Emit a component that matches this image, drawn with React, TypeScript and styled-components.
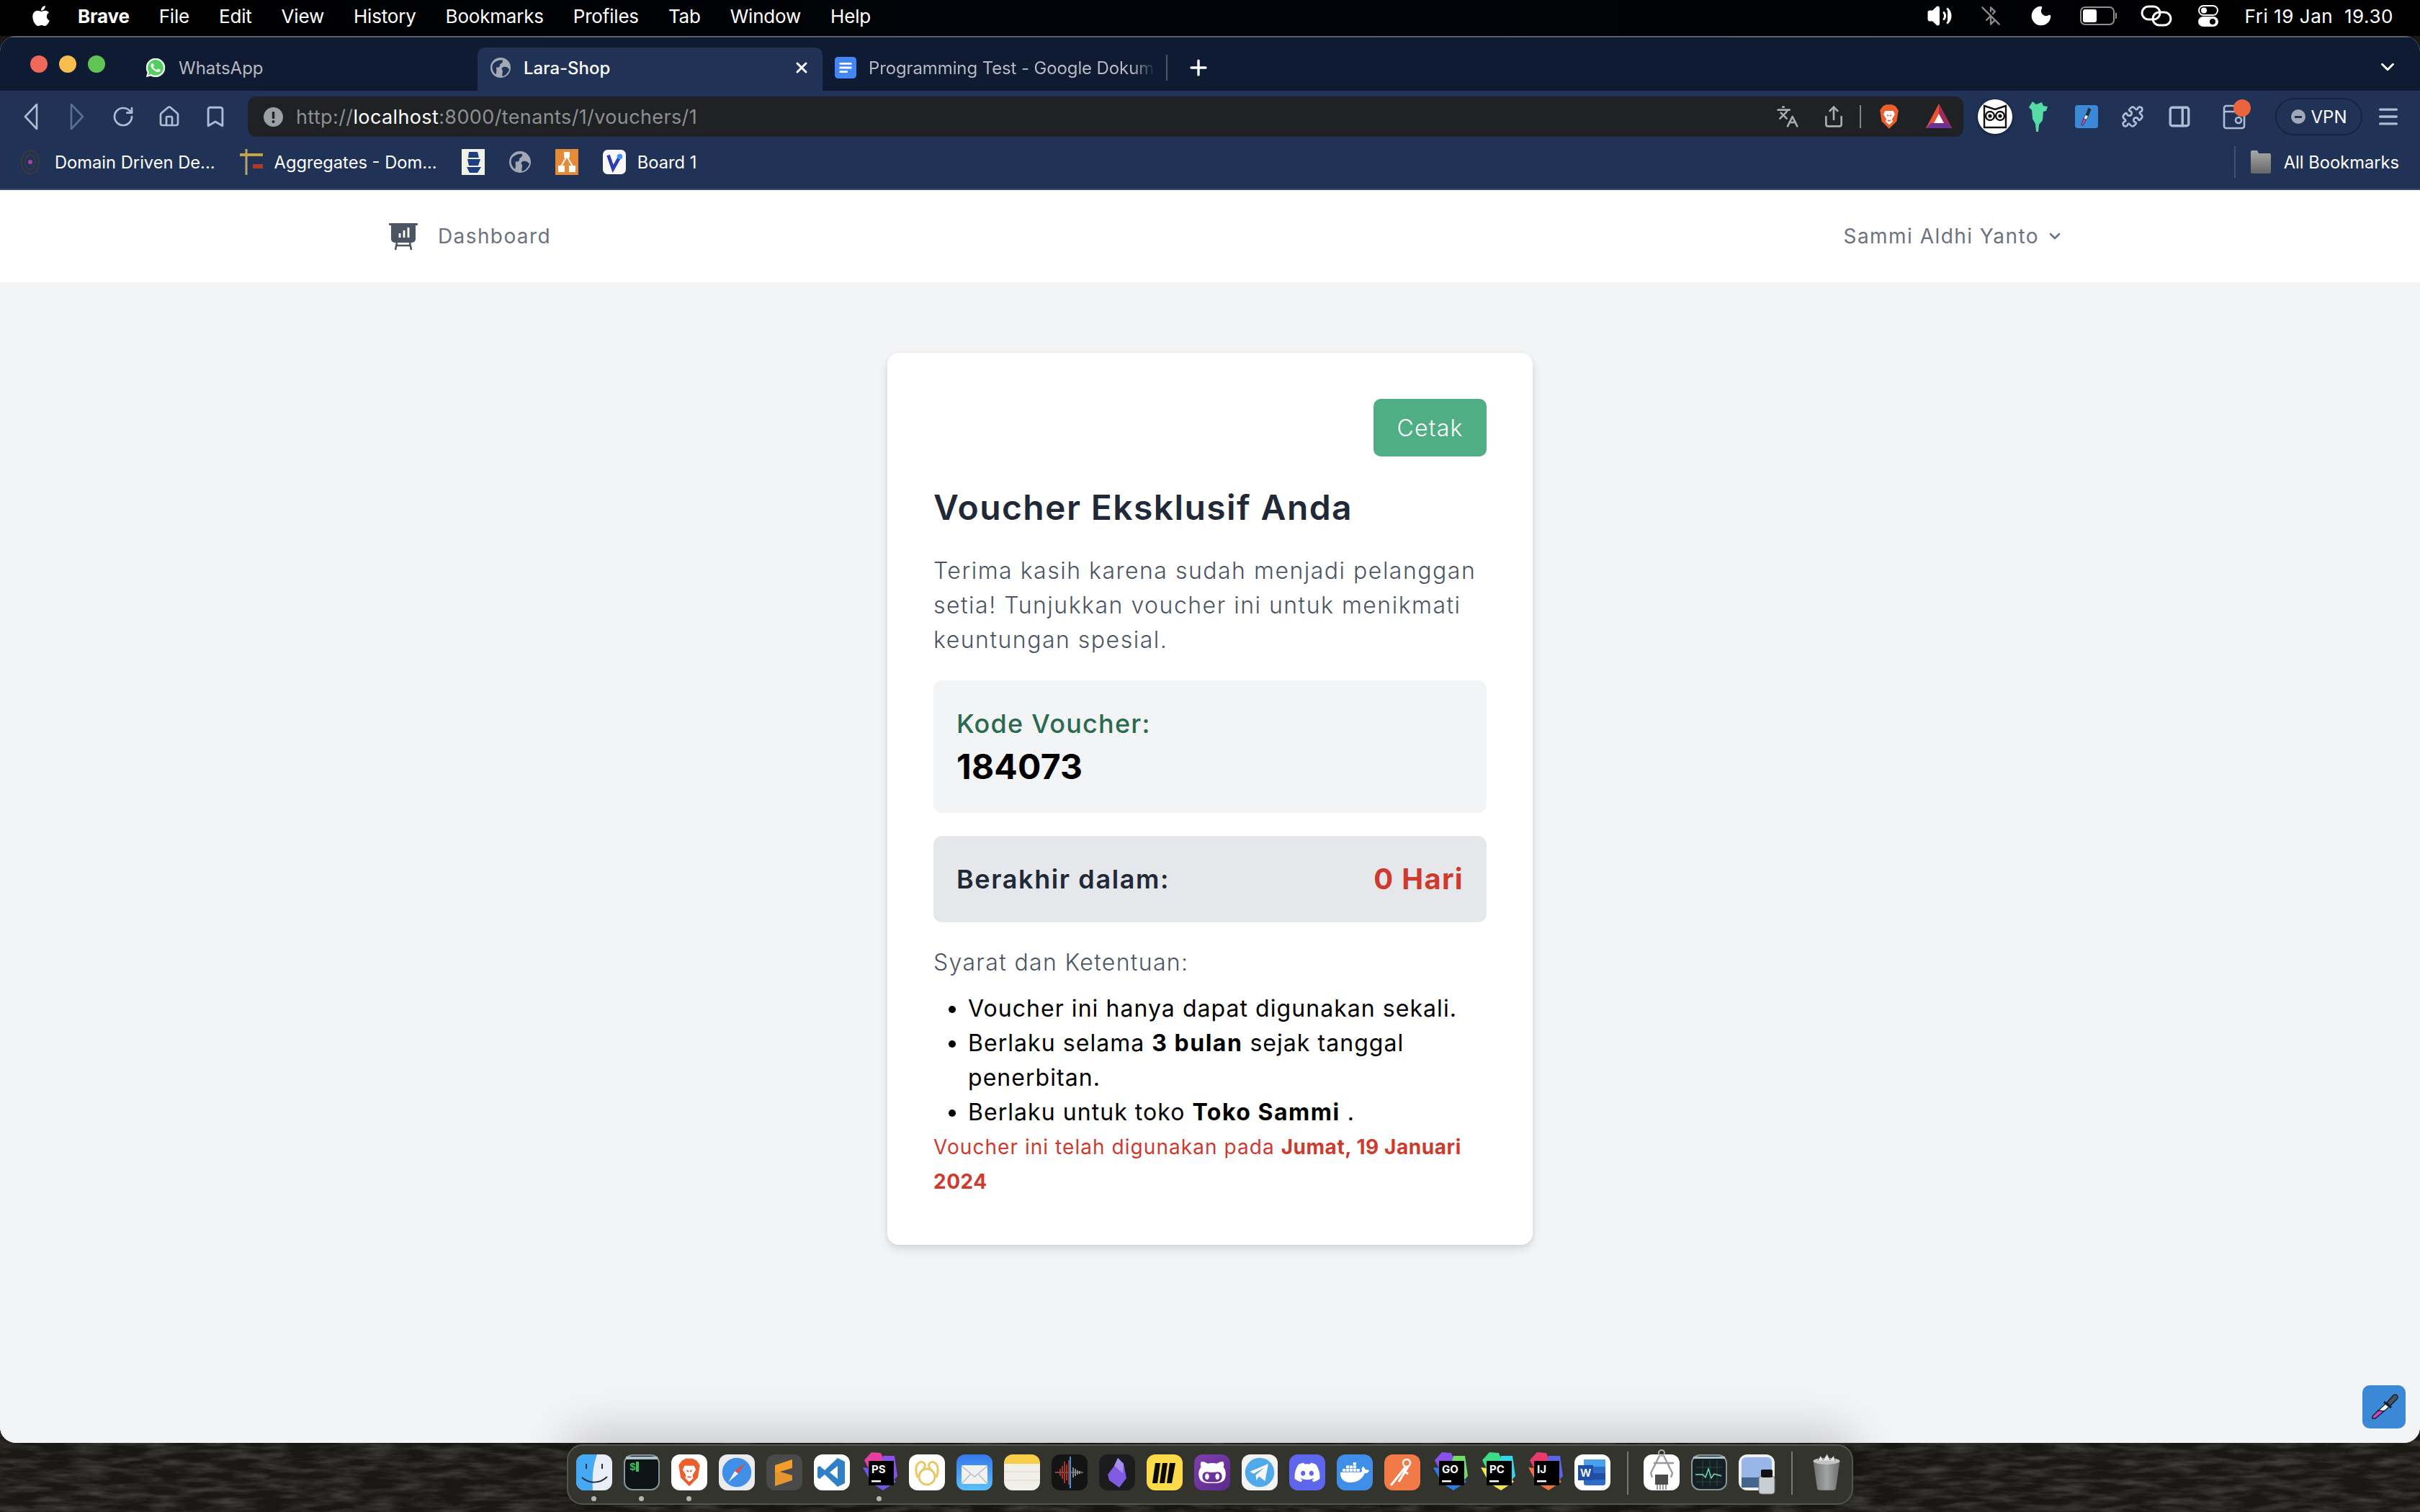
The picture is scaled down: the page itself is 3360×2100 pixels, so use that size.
import React, { PropsWithChildren } from 'react'
import styled, { createGlobalStyle } from 'styled-components'
import { ChevronDown, House, Bookmark, RotateCw, Languages, Share, Puzzle, PanelRight, Menu as MenuIcon, Plus, X, Volume2, BluetoothOff, Moon } from 'lucide-react'
import { FaGithubAlt, FaDiscord, FaDocker, FaWhatsapp, FaApple } from 'react-icons/fa'

const GlobalStyle = createGlobalStyle`
    html, body { margin: 0; padding: 0; background: #1a1916; }
    body { font-family: "Inter", "Liberation Sans", sans-serif; }
    * { box-sizing: border-box; }
`

const Desktop = styled.div`
    position: relative;
    width: 3360px;
    height: 2100px;
    overflow: hidden;
    display: flex;
    flex-direction: column;
    background: #191815;
`

const Rock = styled.svg`
    position: absolute;
    left: 0;
    top: 0;
    width: 3360px;
    height: 2100px;
`

/* mac menu bar */
const MenuBar = styled.div`
    position: relative;
    height: 50px;
    flex: none;
    display: flex;
    align-items: center;
    justify-content: space-between;
    padding: 0 37px 6px 41px;
    background: linear-gradient(90deg, #000 0%, #02040a 50%, #000 100%);
    color: #fff;
    font-size: 26px;
    letter-spacing: -0.2px;
`

const MenuLeft = styled.div`
    display: flex;
    align-items: center;
    gap: 41px;
`

const MenuRight = styled.div`
    display: flex;
    align-items: center;
`

const MenuGlyph = styled.span<{ $w: number }>`
    width: ${p => p.$w}px;
    display: flex;
    justify-content: center;
`

const MenuItem = styled.span<{ $bold?: boolean }>`
    font-weight: ${p => (p.$bold ? 700 : 400)};
`

const AppleMark = styled.span`
    display: flex;
    margin-right: -6px;
`

const Clock = styled.span`
    margin-left: 13px;
    white-space: pre;
    letter-spacing: 0.55px;
`

/* browser window */
const Window = styled.div`
    position: relative;
    height: 1954px;
    flex: none;
    display: flex;
    flex-direction: column;
    border-radius: 22px;
    overflow: hidden;
    background: #f3f4f6;
`

const TabStrip = styled.div`
    height: 76px;
    flex: none;
    display: flex;
    align-items: flex-end;
    background: #0f1b32;
    border-top: 2px solid #5b626e;
`

const Lights = styled.div`
    width: 184px;
    height: 60px;
    display: flex;
    align-items: center;
    gap: 16px;
    padding-left: 42px;
    padding-bottom: 14px;
`

const Light = styled.span<{ $c: string }>`
    width: 24px;
    height: 24px;
    border-radius: 50%;
    background: ${p => p.$c};
`

const Tab = styled.div<{ $active?: boolean; $divider?: boolean }>`
    width: 479px;
    height: 60px;
    display: flex;
    align-items: center;
    gap: 17px;
    padding: 0 17px 4px;
    border-radius: 10px 10px 0 0;
    background: ${p => (p.$active ? '#203256' : 'transparent')};
    color: ${p => (p.$active ? '#fff' : '#b5b9c2')};
    font-size: 24px;
    font-weight: ${p => (p.$active ? 500 : 400)};
    white-space: nowrap;
    overflow: hidden;
    position: relative;
    &::after {
        content: "";
        display: ${p => (p.$divider ? 'block' : 'none')};
        position: absolute;
        right: 0;
        top: 10px;
        bottom: 14px;
        width: 2px;
        background: #4b5568;
    }
`

const TabTitle = styled.span<{ $fade?: boolean }>`
    flex: 1;
    overflow: hidden;
    letter-spacing: ${p => (p.$fade ? '-0.12px' : '0')};
    mask-image: ${p => (p.$fade ? 'linear-gradient(90deg, #000 92%, transparent 100%)' : 'none')};
`

const TabIcon = styled.span`
    display: flex;
    flex: none;
    width: 30px;
    justify-content: center;
`

const WhatsappBadge = styled.span`
    width: 30px;
    height: 30px;
    display: flex;
    align-items: center;
    justify-content: center;
    border-radius: 50%;
    background: radial-gradient(circle, #53cf60 0 62%, transparent 64%);
    color: #fff;
`

const NewTab = styled.span`
    display: flex;
    margin: 0 0 15px 26px;
    color: #fff;
`

const TabMenu = styled.span`
    display: flex;
    margin: 0 30px 18px auto;
    color: #fff;
`

const ToolBar = styled.div`
    height: 70px;
    flex: none;
    display: flex;
    align-items: flex-start;
    padding: 8px 0 0 11px;
    background: #203256;
`

const NavButton = styled.span<{ $dim?: boolean }>`
    width: 64px;
    height: 56px;
    flex: none;
    display: flex;
    align-items: center;
    justify-content: center;
    color: ${p => (p.$dim ? '#5a6f93' : '#aebcd6')};
`

const UrlBar = styled.div`
    width: 2382px;
    height: 56px;
    flex: none;
    margin: 0 12px 0 13px;
    display: flex;
    align-items: center;
    padding: 0 0 0 22px;
    background: #202124;
    border-radius: 12px;
    font-size: 27px;
    color: #8d8f94;
    letter-spacing: 0.38px;
`

const UrlHost = styled.span`
    color: #fff;
`

const UrlText = styled.div`
    margin-left: 18px;
    flex: 1;
`

const UrlAction = styled.span<{ $w: number }>`
    width: ${p => p.$w}px;
    height: 56px;
    flex: none;
    display: flex;
    align-items: center;
    justify-content: center;
    color: #a9abaf;
`

const UrlDivider = styled.span`
    width: 2px;
    height: 32px;
    background: #83858a;
    margin: 0 4px;
`

const ExtSlot = styled.span<{ $w: number }>`
    position: relative;
    width: ${p => p.$w}px;
    height: 56px;
    flex: none;
    display: flex;
    align-items: center;
    justify-content: center;
    color: #aebcd6;
`

const OwlBadge = styled.span`
    width: 48px;
    height: 48px;
    border-radius: 50%;
    background: #fff;
    display: flex;
    align-items: center;
    justify-content: center;
    box-shadow: 0 1px 4px rgba(0, 0, 0, 0.5);
`

const PenBadge = styled.span`
    width: 32px;
    height: 32px;
    border-radius: 4px;
    background: #3b88d6;
    display: flex;
    align-items: center;
    justify-content: center;
`

const NotifyDot = styled.span`
    position: absolute;
    right: 13px;
    top: 4px;
    width: 24px;
    height: 24px;
    border-radius: 50%;
    background: #ea643c;
`

const VpnPill = styled.span`
    width: 121px;
    height: 52px;
    flex: none;
    margin: 2px 0 0 21px;
    display: flex;
    align-items: center;
    justify-content: center;
    gap: 8px;
    border: 2px solid #16243f;
    border-radius: 28px;
    color: #fff;
    font-size: 24px;
`

const VpnDot = styled.span`
    width: 20px;
    height: 20px;
    border-radius: 50%;
    background: #9fa9ba;
    display: flex;
    align-items: center;
    justify-content: center;
    &::before {
        content: "";
        width: 10px;
        height: 3px;
        background: #203256;
    }
`

const BookmarkBar = styled.div`
    height: 68px;
    flex: none;
    display: flex;
    align-items: center;
    padding: 0 29px 8px 28px;
    gap: 34px;
    background: #203256;
    border-bottom: 2px solid #3b4a68;
    color: #fff;
    font-size: 23.7px;
`

const Mark = styled.span`
    display: flex;
    align-items: center;
    gap: 16px;
    white-space: nowrap;
`

const AllMarks = styled(Mark)`
    margin-left: auto;
    gap: 17px;
    padding-left: 20px;
    border-left: 2px solid #3f5070;
    height: 44px;
`

/* page */
const Page = styled.div`
    flex: 1;
    position: relative;
    display: flex;
    flex-direction: column;
    font-family: "Inter", "Liberation Sans", sans-serif;
    background: #f3f4f6;
`

const Nav = styled.nav`
    height: 128px;
    flex: none;
    display: flex;
    align-items: center;
    justify-content: space-between;
    padding: 0 495px 0 540px;
    background: #fff;
    font-size: 28px;
    color: #6b7280;
    letter-spacing: 1.4px;
`

const NavBrand = styled.div`
    display: flex;
    align-items: center;
    gap: 28px;
    line-height: 40px;
`

const NavUser = styled.div`
    display: flex;
    align-items: center;
    gap: 10px;
    letter-spacing: 1.45px;
`

const Main = styled.main`
    flex: 1;
    display: flex;
    justify-content: center;
    align-items: flex-start;
    padding-top: 98px;
`

const Card = styled.div`
    width: 896px;
    padding: 64px;
    background: #fff;
    border-radius: 16px;
    box-shadow: 0 6px 14px rgba(0, 0, 0, 0.1), 0 2px 6px rgba(0, 0, 0, 0.06);
`

const CardTop = styled.div`
    display: flex;
    justify-content: flex-end;
    margin-bottom: 39px;
`

const PrintButton = styled.button`
    width: 157px;
    height: 80px;
    border: 0;
    border-radius: 10px;
    background: #4fae84;
    color: #fff;
    font: 300 32px "Inter", sans-serif;
    letter-spacing: 1.2px;
`

const Title = styled.h1`
    margin: 0 0 32px;
    font-size: 48px;
    line-height: 64px;
    font-weight: 600;
    color: #1f2937;
    letter-spacing: 1.4px;
`

const Lead = styled.p`
    margin: 0 0 32px;
    font-size: 32px;
    line-height: 48px;
    font-weight: 300;
    color: #4b5563;
    letter-spacing: 1.5px;
`

const CodeBox = styled.div`
    padding: 32px;
    border-radius: 12px;
    background: #f3f4f6;
`

const CodeLabel = styled.div`
    font-size: 36px;
    line-height: 56px;
    font-weight: 500;
    color: #2a6b4f;
    letter-spacing: 1.25px;
`

const CodeValue = styled.div`
    font-size: 48px;
    line-height: 64px;
    font-weight: 700;
    color: #000;
    letter-spacing: 0.2px;
`

const ExpiryBox = styled.div`
    display: flex;
    justify-content: space-between;
    align-items: center;
    margin-top: 32px;
    padding: 32px;
    border-radius: 12px;
    background: #e5e7eb;
`

const ExpiryLabel = styled.span`
    font-size: 36px;
    line-height: 56px;
    font-weight: 600;
    color: #1f2937;
    letter-spacing: 1.6px;
`

const ExpiryValue = styled.span`
    font-size: 40px;
    line-height: 56px;
    font-weight: 700;
    color: #d03a2e;
    letter-spacing: 1.3px;
`

const TermsTitle = styled.p`
    margin: 32px 0 16px;
    font-size: 32px;
    line-height: 48px;
    font-weight: 300;
    color: #4b5563;
    letter-spacing: 1.35px;
`

const Terms = styled.ul`
    margin: 0;
    padding: 0 0 0 48px;
    list-style: disc;
    font-size: 32px;
    line-height: 48px;
    font-weight: 400;
    color: #000;
    letter-spacing: 1.05px;
    strong { font-weight: 700; letter-spacing: 1.5px; }
`

const UsedNote = styled.p`
    margin: 0;
    font-size: 28px;
    line-height: 48px;
    font-weight: 400;
    color: #d03a2e;
    letter-spacing: 1.05px;
    strong { font-weight: 700; letter-spacing: 0.55px; }
`

const Dropper = styled.span`
    position: absolute;
    right: 20px;
    bottom: 20px;
    width: 60px;
    height: 60px;
    display: flex;
    align-items: center;
    justify-content: center;
    border-radius: 10px;
    background: #3b88d6;
`

/* dock */
const DockRow = styled.div`
    position: relative;
    z-index: 2;
    display: flex;
    justify-content: center;
    padding-top: 2px;
`

const Dock = styled.div`
    width: 1786px;
    height: 84px;
    display: flex;
    align-items: flex-start;
    gap: 16px;
    padding: 12px 0 0 11px;
    border: 2px solid #55554f;
    border-radius: 22px;
    background: #34342f;
    box-shadow: 0 -12px 70px rgba(0, 0, 0, 0.22);
`

const DockSlot = styled.span<{ $running?: boolean }>`
    position: relative;
    width: 50px;
    height: 50px;
    flex: none;
    svg { display: block; overflow: visible; }
    &::after {
        content: "";
        display: ${p => (p.$running ? 'block' : 'none')};
        position: absolute;
        left: 21px;
        top: 58px;
        width: 7px;
        height: 7px;
        border-radius: 50%;
        background: #b5b5b0;
    }
`

const DockGap = styled.span<{ $left: number; $right: number }>`
    width: 2px;
    height: 60px;
    flex: none;
    margin: -4px ${p => p.$right - 16}px 0 ${p => p.$left - 16}px;
    background: #77776f;
`

const TileIcon = styled.span<{ $bg: string }>`
    width: 50px;
    height: 50px;
    display: flex;
    align-items: center;
    justify-content: center;
    border-radius: 12px;
    background: ${p => p.$bg};
    color: #fff;
`

const Tile = (props: PropsWithChildren<{ bg: string }>) => <TileIcon $bg={props.bg}>{props.children}</TileIcon>

const Svg = (props: PropsWithChildren<{ s?: number; vb?: string }>) => (
    <svg width={props.s ?? 50} height={props.s ?? 50} viewBox={props.vb ?? '0 0 50 50'}>{props.children}</svg>
)

const BraveShield = () => (
    <>
        <path d="M14 7 L20 4 H30 L36 7 L41 14 L38 33 L25 46 L12 33 L9 14 Z" fill="#ec5f2d" />
        <path d="M18 15 H32 L35 21 L30 29 L31 34 L25 39 L19 34 L20 29 L15 21 Z" fill="#fff" />
        <path d="M21 22 L24 24 M29 22 L26 24 M22 32 H28" stroke="#ec5f2d" strokeWidth="2" />
    </>
)

const IdeIcon = (props: { label: string; colors: string[] }) => (
    <Svg>
        <polygon points="4,8 14,-3 27,-2 31,8 12,24" fill={props.colors[0]} />
        <polygon points="30,2 46,2 50,30 36,46 20,38" fill={props.colors[1]} />
        <polygon points="2,18 14,40 30,50 48,38 34,22" fill={props.colors[2]} />
        <rect x="10" y="9" width="35" height="34" fill="#000" />
        <text x="14" y="26" fontFamily="Inter" fontWeight="700" fontSize="15" fill="#fff">{props.label}</text>
        <rect x="14" y="36" width="13" height="2.5" fill="#fff" />
    </Svg>
)

const dockApps: { key: string; running?: boolean; icon: React.ReactNode }[] = [
    { key: 'finder', running: true, icon: (
        <Svg>
            <rect width="50" height="50" rx="12" fill="#e9eef6" />
            <path d="M12 0 H29 C24 14 22 26 23 50 H12 A12 12 0 0 1 0 38 V12 A12 12 0 0 1 12 0Z" fill="#45a9f4" />
            <path d="M14 13 V20 M36 13 V20" stroke="#20303f" strokeWidth="2" />
            <path d="M8 32 C18 41 33 41 43 31" stroke="#20303f" strokeWidth="2" fill="none" />
        </Svg>
    ) },
    { key: 'terminal', running: true, icon: (
        <Svg>
            <rect x="1" y="1" width="48" height="48" rx="11" fill="#0c1416" stroke="#8d9497" strokeWidth="2" />
            <rect x="3" y="3" width="44" height="4" fill="#a9c3c6" />
            <text x="8" y="22" fontFamily="Liberation Mono" fontSize="15" fontWeight="700" fill="#39c05c">$</text>
            <rect x="17" y="10" width="4" height="14" fill="#39c05c" />
        </Svg>
    ) },
    { key: 'brave', running: true, icon: (
        <Tile bg="#fff"><Svg s={46}><BraveShield /></Svg></Tile>
    ) },
    { key: 'safari', icon: (
        <Tile bg="#e9ebee">
            <Svg s={46}>
                <circle cx="25" cy="25" r="22" fill="#3f8fe8" />
                <polygon points="38,10 22,23 27,27" fill="#ec4a3a" />
                <polygon points="12,40 22,23 27,27" fill="#f4f4f4" />
            </Svg>
        </Tile>
    ) },
    { key: 'sublime', icon: (
        <Tile bg="#4a4a4a">
            <Svg>
                <polygon points="36,7 36,19 12,26 12,15" fill="#f59d2c" />
                <polygon points="12,22 36,29 36,36 12,44 12,33" fill="#f59d2c" opacity="0.9" />
            </Svg>
        </Tile>
    ) },
    { key: 'vscode', icon: (
        <Tile bg="#fff">
            <Svg>
                <polygon points="33,5 43,10 43,40 33,45 15,28 8,34 5,32 5,18 8,16 15,22" fill="#2f80c8" />
                <polygon points="33,16 33,34 22,25" fill="#fff" />
            </Svg>
        </Tile>
    ) },
    { key: 'phpstorm', running: true, icon: <IdeIcon label="PS" colors={['#e63ea3', '#8a50e8', '#6f55e8']} /> },
    { key: 'navicat', icon: (
        <Tile bg="#fff">
            <Svg>
                <circle cx="25" cy="31" r="11" fill="none" stroke="#e9c765" strokeWidth="3" />
                <path d="M12 32 C6 16 14 7 21 12 C24 15 21 20 19 22 M38 32 C44 16 36 7 29 12 C26 15 29 20 31 22" fill="none" stroke="#e9c765" strokeWidth="3" />
            </Svg>
        </Tile>
    ) },
    { key: 'mail', icon: (
        <Tile bg="linear-gradient(#3478ea, #5ac0fb)">
            <Svg>
                <rect x="7" y="15" width="36" height="26" rx="2" fill="#f1f1f1" />
                <path d="M7 16 L25 31 L43 16 M7 41 L20 27 M43 41 L30 27" stroke="#b7bcc2" strokeWidth="1.4" fill="none" />
            </Svg>
        </Tile>
    ) },
    { key: 'notes', icon: (
        <Tile bg="linear-gradient(#f8cd47 0 26%, #f1efe7 26%)">
            <Svg>
                <path d="M0 24 H50 M0 36 H50" stroke="#dfdcd2" strokeWidth="1.2" />
            </Svg>
        </Tile>
    ) },
    { key: 'voice', icon: (
        <Tile bg="#141414">
            <Svg>
                <path d="M5 25 H44" stroke="#777" strokeWidth="1.5" />
                <path d="M8 25 H10 M12 20 V30 M15 16 V34 M18 10 V40 M21 14 V36 M24 8 V42" stroke="#a4332b" strokeWidth="2" />
                <path d="M30 18 V32 M33 20 V30 M36 22 V28 M39 23 V27" stroke="#8a8a8a" strokeWidth="2" />
                <path d="M26 3 V47" stroke="#3b96e2" strokeWidth="2" />
            </Svg>
        </Tile>
    ) },
    { key: 'obsidian', icon: (
        <Tile bg="#1c1c1e">
            <Svg>
                <polygon points="26,5 34,13 38,33 28,46 14,36 12,28 21,16" fill="#7e5be0" />
                <polygon points="26,5 34,13 33,26 21,16" fill="#a98cf0" />
            </Svg>
        </Tile>
    ) },
    { key: 'miro', icon: (
        <Tile bg="#fbdb4a">
            <Svg>
                <polygon points="12,12 19,12 15,40 8,40" fill="#0b0b0b" />
                <polygon points="22,12 29,12 25,40 18,40" fill="#0b0b0b" />
                <polygon points="32,12 40,12 35,40 28,40" fill="#0b0b0b" />
            </Svg>
        </Tile>
    ) },
    { key: 'github', icon: <Tile bg="linear-gradient(135deg, #7f3fae, #5b2a8c)"><FaGithubAlt size={40} /></Tile> },
    { key: 'telegram', icon: (
        <Tile bg="#f2f3f3">
            <Svg s={46}>
                <circle cx="25" cy="25" r="22" fill="#50a9e8" />
                <polygon points="10,24 38,12 33,38 24,31 20,37 19,29 32,18 16,27" fill="#f5f7f8" />
            </Svg>
        </Tile>
    ) },
    { key: 'discord', icon: <Tile bg="#5f66ee"><FaDiscord size={38} /></Tile> },
    { key: 'docker', icon: <Tile bg="#3f8fe8"><FaDocker size={40} /></Tile> },
    { key: 'postman', icon: (
        <Tile bg="#f27a47">
            <Svg>
                <circle cx="31" cy="12" r="5" fill="none" stroke="#fff" strokeWidth="2.5" />
                <path d="M29 18 L14 37 L9 43 M33 17 L20 38 M27 23 L33 27" stroke="#fff" strokeWidth="3.2" fill="none" />
            </Svg>
        </Tile>
    ) },
    { key: 'goland', icon: <IdeIcon label="GO" colors={['#8a50e8', '#6fdc6a', '#2b7fe8']} /> },
    { key: 'pycharm', icon: <IdeIcon label="PC" colors={['#3ddc84', '#30d6e8', '#f2e64b']} /> },
    { key: 'intellij', icon: <IdeIcon label="IJ" colors={['#ea3a6c', '#5b63e8', '#f0713a']} /> },
    { key: 'word', icon: (
        <Tile bg="#fff">
            <Svg>
                <rect x="13" y="7" width="30" height="36" rx="3" fill="#2c6bc8" />
                <rect x="13" y="7" width="30" height="10" fill="#49a0ea" />
                <rect x="13" y="26" width="30" height="9" fill="#1e4fa0" />
                <rect x="5" y="15" width="21" height="21" fill="#1d4fa8" />
                <text x="8" y="31" fontFamily="Inter" fontWeight="600" fontSize="15" fill="#fff">W</text>
            </Svg>
        </Tile>
    ) },
]

const utilApps: { key: string; icon: React.ReactNode }[] = [
    { key: 'sysinfo', icon: (
        <Tile bg="#fff">
            <Svg>
                <circle cx="25" cy="-2" r="4" fill="none" stroke="#aaa" strokeWidth="2" />
                <path d="M22 2 L10 26 L12 32 M28 2 L40 26 L38 32 M14 12 H42" stroke="#9a9a9a" strokeWidth="2.4" fill="none" />
                <rect x="16" y="28" width="18" height="14" fill="#4b4b4b" />
                <path d="M19 42 V49 M23 42 V49 M27 42 V49 M31 42 V49" stroke="#777" strokeWidth="1.5" />
            </Svg>
        </Tile>
    ) },
    { key: 'activity', icon: (
        <Svg>
            <rect x="1" y="1" width="48" height="48" rx="11" fill="#142023" stroke="#8d9497" strokeWidth="2" />
            <rect x="3" y="3" width="44" height="3" fill="#a9c3c6" />
            <path d="M7 18 H43 M7 28 H43 M7 38 H43 M16 8 V44 M26 8 V44 M36 8 V44" stroke="#2c4a44" strokeWidth="1" />
            <path d="M6 28 H16 L20 32 L24 20 L28 33 L32 27 L42 30" stroke="#7de0bd" strokeWidth="1.4" fill="none" />
        </Svg>
    ) },
    { key: 'preview', icon: (
        <Svg>
            <rect width="50" height="50" rx="12" fill="#eeeeec" />
            <rect x="4" y="4" width="42" height="42" rx="6" fill="#98b7e8" />
            <rect x="4" y="32" width="30" height="14" fill="#45668c" />
            <rect x="28" y="30" width="22" height="25" rx="4" fill="#c9ced2" stroke="#777" />
            <rect x="31" y="21" width="16" height="11" rx="2" fill="#111" />
        </Svg>
    ) },
]

const Trash = () => (
    <svg width="46" height="50" viewBox="0 0 50 50">
        <defs>
            <linearGradient id="trashBody" x1="0" x2="1">
                <stop offset="0" stopColor="#6f7170" />
                <stop offset="0.5" stopColor="#a3a5a4" />
                <stop offset="1" stopColor="#6b6d6c" />
            </linearGradient>
        </defs>
        <path d="M5 8 H45 L39 50 A6 6 0 0 1 33 52 H16 A6 6 0 0 1 11 50 Z" fill="url(#trashBody)" />
        <ellipse cx="25" cy="8" rx="20" ry="5" fill="#c3c5c4" />
        <path d="M12 7 L16 0 L20 6 L26 -3 L30 6 L36 0 L38 7" fill="#e8e8e8" stroke="#555" strokeWidth="1" />
    </svg>
)

const BackIcon = () => (
    <svg width="24" height="40" viewBox="0 0 24 40" fill="none" stroke="currentColor" strokeWidth="2.6" strokeLinejoin="round">
        <path d="M20 3 L4 20 L20 37 Z" />
    </svg>
)

const ForwardIcon = () => (
    <svg width="24" height="40" viewBox="0 0 24 40" fill="none" stroke="currentColor" strokeWidth="2.6" strokeLinejoin="round">
        <path d="M4 3 L20 20 L4 37 Z" />
    </svg>
)

const AlertIcon = () => (
    <svg width="27" height="27" viewBox="0 0 27 27">
        <circle cx="13.5" cy="13.5" r="13.5" fill="#9aa0a6" />
        <rect x="11.8" y="6" width="3.4" height="10" rx="1.2" fill="#202124" />
        <circle cx="13.5" cy="20" r="2" fill="#202124" />
    </svg>
)

const EarthIcon = (props: { bg: string; s: number }) => (
    <svg width={props.s} height={props.s} viewBox="0 0 30 30">
        <circle cx="15" cy="15" r="15" fill="#a3a9b4" />
        <path d="M4 9 C8 5 13 3 18 4 C19 7 16 9 14 10 C15 13 12 16 9 14 C8 17 10 20 8 25 C3 21 1 14 4 9 Z" fill={props.bg} />
        <path d="M19 14 C23 13 27 15 28 18 C26 23 22 27 18 28 C16 24 20 21 17 18 C16 16 17 15 19 14 Z" fill={props.bg} />
    </svg>
)

const BatIcon = () => (
    <svg width="40" height="36" viewBox="0 0 40 36">
        <polygon points="20,0 38,34 2,34" fill="#e9512f" />
        <polygon points="20,0 38,34 20,22" fill="#a12a5f" />
        <polygon points="8,27 32,27 37,34 3,34" fill="#6b3298" />
        <polygon points="20,14 27,27 13,27" fill="#fff" />
    </svg>
)

const OwlIcon = () => (
    <svg width="36" height="36" viewBox="0 0 36 36" fill="none" stroke="#111" strokeWidth="2.4">
        <path d="M3 3 L18 8 L33 3 V33 H3 Z" />
        <circle cx="11" cy="17" r="6" />
        <circle cx="25" cy="17" r="6" />
        <circle cx="11" cy="17" r="1.4" fill="#111" />
        <circle cx="25" cy="17" r="1.4" fill="#111" />
    </svg>
)

const GhostIcon = () => (
    <svg width="30" height="46" viewBox="0 0 30 46" fill="#57dba4">
        <path d="M7 2 L12 6 L20 3 L22 8 L28 9 L26 15 L22 16 L21 28 L16 34 L15 44 L12 44 L11 33 L7 26 L6 14 L2 10 Z" />
    </svg>
)

const PenIcon = () => (
    <svg width="24" height="30" viewBox="0 0 32 46">
        <path d="M20 4 L26 8 L20 22 L14 19 Z" fill="#25313c" />
        <path d="M14 19 L20 22 L15 30 L10 27 Z" fill="#fff" stroke="#111" />
        <path d="M10 27 L15 30 L8 42 L5 40 Z" fill="#d14ac0" stroke="#111" />
    </svg>
)

const WalletIcon = () => (
    <svg width="32" height="38" viewBox="0 0 32 38" fill="none" stroke="currentColor" strokeWidth="2.6">
        <rect x="2" y="4" width="28" height="31" rx="3" />
        <path d="M2 12 H30" />
        <circle cx="22" cy="24" r="4" />
    </svg>
)

const FolderIcon = () => (
    <svg width="30" height="34" viewBox="0 0 30 34">
        <defs>
            <linearGradient id="folderFill" x1="0" x2="0" y1="0" y2="1">
                <stop offset="0" stopColor="#a9a9a9" />
                <stop offset="1" stopColor="#666" />
            </linearGradient>
        </defs>
        <path d="M1 3 A2 2 0 0 1 3 1 H10 L12 5 H27 A2 2 0 0 1 29 7 V31 A2 2 0 0 1 27 33 H3 A2 2 0 0 1 1 31 Z" fill="url(#folderFill)" />
    </svg>
)

const BatteryIcon = () => (
    <svg width="52" height="26" viewBox="0 0 52 26" fill="none">
        <rect x="1" y="1" width="46" height="24" rx="6" stroke="#8f8f8f" strokeWidth="2" />
        <rect x="4" y="4" width="19" height="18" rx="3" fill="#fff" />
        <path d="M50 9 V17" stroke="#8f8f8f" strokeWidth="2" />
    </svg>
)

const LinkedIcon = () => (
    <svg width="44" height="30" viewBox="0 0 44 30" fill="none" stroke="#fff" strokeWidth="3">
        <rect x="2" y="2" width="25" height="18" rx="9" />
        <rect x="17" y="10" width="25" height="18" rx="9" />
    </svg>
)

const ControlIcon = () => (
    <svg width="28" height="30" viewBox="0 0 28 30">
        <rect x="1" y="1" width="26" height="13" rx="6.5" fill="none" stroke="#fff" strokeWidth="2" />
        <circle cx="8" cy="7.5" r="4" fill="#fff" />
        <rect x="0" y="16" width="28" height="14" rx="7" fill="#fff" />
        <circle cx="20" cy="23" r="4" fill="#000" />
    </svg>
)

const DocsIcon = () => (
    <svg width="32" height="32" viewBox="0 0 32 32">
        <rect width="32" height="32" rx="5" fill="#4285f4" />
        <path d="M7 10 H25 M7 16 H25 M7 22 H19" stroke="#fff" strokeWidth="3" />
    </svg>
)

const BoardIcon = () => (
    <svg width="32" height="36" viewBox="0 0 34 36">
        <rect width="34" height="36" rx="7" fill="#f7f7fa" />
        <path d="M8 8 L15 28 L24 12" fill="none" stroke="#2b3bb0" strokeWidth="5" />
        <circle cx="25" cy="10" r="4" fill="#4c8ef0" />
    </svg>
)

const SpiralIcon = () => (
    <svg width="32" height="34" viewBox="0 0 32 34" fill="none" stroke="#3a3a3a" strokeWidth="2">
        <ellipse cx="14" cy="17" rx="12" ry="16" />
        <ellipse cx="14" cy="17" rx="7" ry="10" />
        <circle cx="14" cy="17" r="3" fill="#b0409c" stroke="none" />
    </svg>
)

const CraneIcon = () => (
    <svg width="32" height="36" viewBox="0 0 32 36">
        <path d="M0 6 H32 V10 H0 Z" fill="#c9a33f" />
        <path d="M9 0 V36" stroke="#b8a46a" strokeWidth="3" />
        <rect x="18" y="21" width="14" height="6" fill="#b0392f" />
    </svg>
)

const ShipIcon = () => (
    <svg width="32" height="36" viewBox="0 0 32 36">
        <rect width="32" height="36" fill="#f1f1e6" />
        <path d="M10 4 H22 L24 12 H9 Z M8 14 H26 L23 23 H10 Z M7 25 H27 L22 33 H11 Z" fill="#1b3f82" />
    </svg>
)

const DiagramIcon = () => (
    <svg width="32" height="36" viewBox="0 0 32 36">
        <rect width="32" height="36" fill="#e58a35" />
        <path d="M16 10 L8 24 M16 10 L24 24" stroke="#fff" strokeWidth="2" />
        <rect x="12" y="4" width="8" height="8" fill="#fff" />
        <rect x="4" y="23" width="9" height="9" fill="#fff" />
        <rect x="19" y="23" width="9" height="9" fill="#fff" />
    </svg>
)

const BrandIcon = () => (
    <svg width="40" height="40" viewBox="0 0 40 40" fill="#4b5563">
        <rect x="0" y="2" width="40" height="3" rx="1" />
        <path d="M3 5 H37 V24 A5 5 0 0 1 32 29 H8 A5 5 0 0 1 3 24 Z" />
        <path d="M11 29 L9 39 M29 29 L31 39 M10 33 H30" stroke="#4b5563" strokeWidth="2.6" />
        <path d="M15 16 V22 M21 12 V22 M27 8 V22" stroke="#fff" strokeWidth="2.8" />
    </svg>
)

const DropperIcon = () => (
    <svg width="40" height="40" viewBox="0 0 40 40">
        <path d="M24 14 L33 4 A3.5 3.5 0 0 1 38 9 L28 19 Z" fill="#45555f" stroke="#15202a" strokeWidth="1.6" />
        <path d="M20 13 L30 21" stroke="#15202a" strokeWidth="3" />
        <path d="M22 16 L27 20 L20 26 L12 25 Z" fill="#fff" stroke="#15202a" strokeWidth="1.2" />
        <path d="M12 25 L20 26 L8 36 L4 36 L4 33 Z" fill="#cf47bd" stroke="#15202a" strokeWidth="1.4" />
    </svg>
)

export default function App() {
    return (
        <>
            <GlobalStyle />
            <Desktop>
                <Rock aria-hidden="true">
                    <filter id="rockGrain">
                        <feTurbulence type="fractalNoise" baseFrequency="0.02 0.11" numOctaves="5" seed="4" />
                        <feColorMatrix values="0 0 0 0 0.2  0 0 0 0 0.19  0 0 0 0 0.17  0.8 0 0 0 -0.3" />
                    </filter>
                    <rect y="1990" width="3360" height="110" filter="url(#rockGrain)" />
                </Rock>

                <MenuBar>
                    <MenuLeft>
                        <AppleMark><FaApple size={32} color="#fff" /></AppleMark>
                        <MenuItem $bold>Brave</MenuItem>
                        {['File', 'Edit', 'View', 'History', 'Bookmarks', 'Profiles', 'Tab', 'Window', 'Help'].map(m => (
                            <MenuItem key={m}>{m}</MenuItem>
                        ))}
                    </MenuLeft>
                    <MenuRight>
                        <MenuGlyph $w={70}><Volume2 size={36} color="#fff" fill="#fff" strokeWidth={2} /></MenuGlyph>
                        <MenuGlyph $w={72}><BluetoothOff size={28} color="#8a8a8a" /></MenuGlyph>
                        <MenuGlyph $w={68}><Moon size={32} color="#fff" fill="#fff" /></MenuGlyph>
                        <MenuGlyph $w={92}><BatteryIcon /></MenuGlyph>
                        <MenuGlyph $w={68}><LinkedIcon /></MenuGlyph>
                        <MenuGlyph $w={76}><ControlIcon /></MenuGlyph>
                        <Clock>Fri 19 Jan  19.30</Clock>
                    </MenuRight>
                </MenuBar>

                <Window>
                    <TabStrip>
                        <Lights>
                            <Light $c="#f0685c" />
                            <Light $c="#f5be4f" />
                            <Light $c="#5fc454" />
                        </Lights>
                        <Tab>
                            <TabIcon><WhatsappBadge><FaWhatsapp size={30} /></WhatsappBadge></TabIcon>
                            <TabTitle>WhatsApp</TabTitle>
                        </Tab>
                        <Tab $active>
                            <TabIcon><EarthIcon bg="#203256" s={28} /></TabIcon>
                            <TabTitle>Lara-Shop</TabTitle>
                            <X size={24} color="#fff" strokeWidth={3} />
                        </Tab>
                        <Tab $divider>
                            <TabIcon><DocsIcon /></TabIcon>
                            <TabTitle $fade>Programming Test - Google Dokumen</TabTitle>
                        </Tab>
                        <NewTab><Plus size={34} strokeWidth={2.4} /></NewTab>
                        <TabMenu><ChevronDown size={30} strokeWidth={2.4} /></TabMenu>
                    </TabStrip>

                    <ToolBar>
                        <NavButton><BackIcon /></NavButton>
                        <NavButton $dim><ForwardIcon /></NavButton>
                        <NavButton><RotateCw size={32} strokeWidth={2} /></NavButton>
                        <NavButton><House size={32} strokeWidth={2} /></NavButton>
                        <NavButton><Bookmark size={34} strokeWidth={2} /></NavButton>
                        <UrlBar>
                            <AlertIcon />
                            <UrlText>http://<UrlHost>localhost</UrlHost>:8000/tenants/1/vouchers/1</UrlText>
                            <UrlAction $w={64}><Languages size={32} /></UrlAction>
                            <UrlAction $w={64}><Share size={32} /></UrlAction>
                            <UrlDivider />
                            <UrlAction $w={70}><Svg s={40}><BraveShield /></Svg></UrlAction>
                            <UrlAction $w={68}><BatIcon /></UrlAction>
                        </UrlBar>
                        <ExtSlot $w={64}><OwlBadge><OwlIcon /></OwlBadge></ExtSlot>
                        <ExtSlot $w={56}><GhostIcon /></ExtSlot>
                        <ExtSlot $w={78}><PenBadge><PenIcon /></PenBadge></ExtSlot>
                        <ExtSlot $w={50}><Puzzle size={32} strokeWidth={2} /></ExtSlot>
                        <ExtSlot $w={80}><PanelRight size={34} strokeWidth={2.4} /></ExtSlot>
                        <ExtSlot $w={72}><WalletIcon /><NotifyDot /></ExtSlot>
                        <VpnPill><VpnDot />VPN</VpnPill>
                        <ExtSlot $w={72}><MenuIcon size={34} strokeWidth={2.4} /></ExtSlot>
                    </ToolBar>

                    <BookmarkBar>
                        <Mark><SpiralIcon />Domain Driven De...</Mark>
                        <Mark><CraneIcon />Aggregates - Dom...</Mark>
                        <Mark><ShipIcon /></Mark>
                        <Mark><EarthIcon bg="#203256" s={30} /></Mark>
                        <Mark><DiagramIcon /></Mark>
                        <Mark><BoardIcon />Board 1</Mark>
                        <AllMarks><FolderIcon />All Bookmarks</AllMarks>
                    </BookmarkBar>

                    <Page>
                        <Nav>
                            <NavBrand><BrandIcon />Dashboard</NavBrand>
                            <NavUser>Sammi Aldhi Yanto<ChevronDown size={24} strokeWidth={2.6} /></NavUser>
                        </Nav>
                        <Main>
                            <Card>
                                <CardTop><PrintButton>Cetak</PrintButton></CardTop>
                                <Title>Voucher Eksklusif Anda</Title>
                                <Lead>Terima kasih karena sudah menjadi pelanggan setia! Tunjukkan voucher ini untuk menikmati keuntungan spesial.</Lead>
                                <CodeBox>
                                    <CodeLabel>Kode Voucher:</CodeLabel>
                                    <CodeValue>184073</CodeValue>
                                </CodeBox>
                                <ExpiryBox>
                                    <ExpiryLabel>Berakhir dalam:</ExpiryLabel>
                                    <ExpiryValue>0 Hari</ExpiryValue>
                                </ExpiryBox>
                                <TermsTitle>Syarat dan Ketentuan:</TermsTitle>
                                <Terms>
                                    <li>Voucher ini hanya dapat digunakan sekali.</li>
                                    <li>Berlaku selama <strong>3 bulan</strong> sejak tanggal penerbitan.</li>
                                    <li>Berlaku untuk toko <strong>Toko Sammi</strong> .</li>
                                </Terms>
                                <UsedNote>Voucher ini telah digunakan pada <strong>Jumat, 19 Januari 2024</strong></UsedNote>
                            </Card>
                        </Main>
                        <Dropper><DropperIcon /></Dropper>
                    </Page>
                </Window>

                <DockRow>
                    <Dock>
                        {dockApps.map(a => <DockSlot key={a.key} $running={a.running}>{a.icon}</DockSlot>)}
                        <DockGap $left={23} $right={21} />
                        {utilApps.map(a => <DockSlot key={a.key}>{a.icon}</DockSlot>)}
                        <DockGap $left={23} $right={24} />
                        <DockSlot><Trash /></DockSlot>
                    </Dock>
                </DockRow>
            </Desktop>
        </>
    )
}
